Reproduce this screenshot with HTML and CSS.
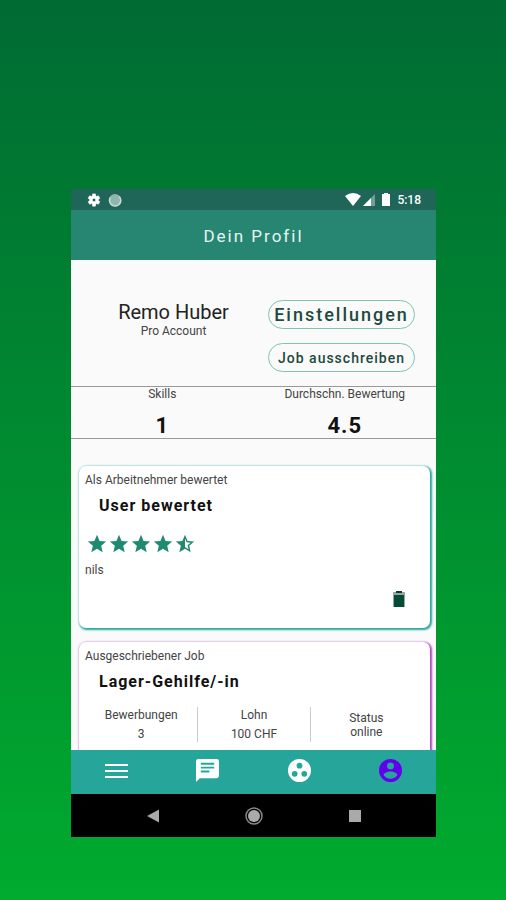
FILE: index.html
```html
<!DOCTYPE html>
<html lang="de">
<head>
<meta charset="utf-8">
<meta name="viewport" content="width=device-width, initial-scale=1">
<title>Dein Profil</title>
<link rel="stylesheet" href="styles.css">
</head>
<body>
<div class="phone">
  <div class="status">
    <svg class="status-icon" viewBox="0 0 24 24" aria-hidden="true"><path fill="#fff" fill-rule="evenodd" d="M19.4 13a7.500 7.500 0 0 0 0-2l2.600-2-2.500-4.300-3 1.200a8 8 0 0 0-1.700-1L14.400 1.500h-4.800L9.200 4.900a8 8 0 0 0-1.700 1l-3-1.200L2 9l2.600 2a7.500 7.500 0 0 0 0 2L2 15l2.500 4.300 3-1.200a8 8 0 0 0 1.700 1l.4 3.400h4.800l.4-3.400a8 8 0 0 0 1.700-1l3 1.200L22 15zM12 15a3 3 0 1 1 0-6 3 3 0 0 1 0 6z" stroke="#fff"/></svg>
    <svg class="status-icon" viewBox="0 0 24 24" aria-hidden="true"><circle cx="12" cy="12" r="10.500" fill="#8fb5ae"/><path d="M4 8a9.500 9.500 0 1 0 15-2" fill="none" stroke="#c5dad6" stroke-width="3"/></svg>
    <span class="status-right">
      <svg class="wifi" viewBox="0 0 16 13" aria-hidden="true"><path fill="#fff" d="M0 3Q8-3 16 3L8 13z"/></svg>
      <svg class="signal" viewBox="0 0 12 12" aria-hidden="true"><path fill="#6f9f95" d="M12 0v12H0z"/><path fill="#fff" d="M8 4v8H0z"/></svg>
      <svg class="battery" viewBox="0 0 8 13" aria-hidden="true"><path fill="#fff" d="M2 0h4v1h2v12H0V1h2z"/></svg>
      <span>5:18</span>
    </span>
  </div>
  <header class="bar"><h1>Dein Profil</h1></header>
  <main class="content">
    <section class="profile">
      <div class="person">
        <h2>Remo Huber</h2>
        <p>Pro Account</p>
      </div>
      <div class="actions">
        <button class="pill pill-large" type="button">Einstellungen</button>
        <button class="pill" type="button">Job ausschreiben</button>
      </div>
    </section>
    <section class="stats">
      <div><p>Skills</p><strong>1</strong></div>
      <div><p>Durchschn. Bewertung</p><strong>4.5</strong></div>
    </section>
    <section class="cards">
      <article class="card card-teal">
        <p>Als Arbeitnehmer bewertet</p>
        <h3>User bewertet</h3>
        <div class="stars" role="img" aria-label="4.5">
          <svg viewBox="0 0 24 24"><path d="M12 17.300 18.200 21l-1.600-7L22 9.200l-7.200-.6L12 2 9.200 8.600 2 9.200 7.500 14l-1.700 7z"/></svg>
          <svg viewBox="0 0 24 24"><path d="M12 17.300 18.200 21l-1.600-7L22 9.200l-7.200-.6L12 2 9.200 8.600 2 9.200 7.500 14l-1.700 7z"/></svg>
          <svg viewBox="0 0 24 24"><path d="M12 17.300 18.200 21l-1.600-7L22 9.200l-7.200-.6L12 2 9.200 8.600 2 9.200 7.500 14l-1.700 7z"/></svg>
          <svg viewBox="0 0 24 24"><path d="M12 17.300 18.200 21l-1.600-7L22 9.200l-7.200-.6L12 2 9.200 8.600 2 9.200 7.500 14l-1.700 7z"/></svg>
          <svg viewBox="0 0 24 24"><path d="m22 9.200-7.200-.6L12 2 9.200 8.600 2 9.200 7.500 14l-1.700 7 6.200-3.700 6.200 3.700-1.600-7zM12 15.400V6.100l1.700 4 4.400.4-3.300 2.900 1 4.300z"/></svg>
        </div>
        <p>nils</p>
        <button class="delete" type="button" aria-label="Löschen">
          <svg viewBox="0 0 12 17" aria-hidden="true"><path fill="#91aaa0" d="M0 1h12v15H0z"/><path fill="#064b38" d="M1 4h10v12H1z"/><path fill="#123c2f" d="M3 0h6v2H3z"/></svg>
        </button>
      </article>
      <article class="card card-purple">
        <p>Ausgeschriebener Job</p>
        <h3>Lager-Gehilfe/-in</h3>
        <dl class="facts">
          <div><dt>Bewerbungen</dt><dd>3</dd></div>
          <div><dt>Lohn</dt><dd>100 CHF</dd></div>
          <div class="tight"><dt>Status</dt><dd>online</dd></div>
        </dl>
      </article>
    </section>
  </main>
  <nav class="tabs">
    <a href="#" aria-label="Menü"><svg viewBox="0 0 23 23"><path d="M0 5h23v2H0zM0 11h23v2H0zM0 17h23v2H0z"/></svg></a>
    <a href="#" aria-label="Nachrichten"><svg viewBox="0 0 24 24"><path fill-rule="evenodd" d="M2.500 0h19A2.500 2.500 0 0 1 24 2.500v15a2.500 2.500 0 0 1-2.500 2.500H4l-4 4V2.500A2.500 2.500 0 0 1 2.500 0zM5 4v2h14V4zm0 4v2h14V8zm0 4v2h9v-2z"/></svg></a>
    <a href="#" aria-label="Gruppe"><svg viewBox="0 0 24 24"><circle cx="12" cy="12" r="12"/><g fill="#26a69a"><circle cx="12" cy="7" r="3"/><circle cx="7" cy="15.500" r="3"/><circle cx="17" cy="15.500" r="3"/></g></svg></a>
    <a class="active" href="#" aria-label="Profil"><svg viewBox="0 0 24 24"><path fill-rule="evenodd" d="M12 0a12 12 0 1 0 0 24 12 12 0 0 0 0-24zm0 3.600a3.600 3.600 0 1 1 0 7.200 3.600 3.600 0 0 1 0-7.200zm0 17c-3 0-5.700-1.500-7.200-3.900 0-2.400 4.800-3.700 7.200-3.700s7.200 1.300 7.200 3.700c-1.500 2.400-4.200 3.900-7.200 3.900z"/></svg></a>
  </nav>
  <div class="system">
    <button type="button" aria-label="Zurück"><svg viewBox="0 0 18 18"><path fill="#aaa" d="M3 9 15 2.500v13z"/></svg></button>
    <button type="button" aria-label="Start"><svg viewBox="0 0 18 18"><circle cx="9" cy="9" r="8" fill="none" stroke="#888" stroke-width="1.500"/><circle cx="9" cy="9" r="6" fill="#aaa"/></svg></button>
    <button type="button" aria-label="Übersicht"><svg viewBox="0 0 18 18"><path fill="#aaa" d="M3 3h12v12H3z"/></svg></button>
  </div>
</div>
</body>
</html>
```
FILE: styles.css
```css
* { box-sizing: border-box; }

body {
  margin: 0;
  height: 100vh;
  padding: 189px 70px 63px 71px;
  display: flex;
  background: linear-gradient(#006b33, #00ab2e);
  font-family: Roboto, "Liberation Sans", sans-serif;
  font-size: 12px;
  line-height: 16px;
  color: #444;
}

h1, h2, h3, p, dl, dd { margin: 0; }
svg { display: block; }

button {
  padding: 0;
  border: 0;
  background: none;
  font-family: inherit;
}

.phone {
  flex: 1;
  min-width: 0;
  display: flex;
  flex-direction: column;
  background: #fafafa;
}

.status {
  flex: none;
  height: 21px;
  padding: 0 15px 0 16px;
  display: flex;
  align-items: center;
  gap: 7px;
  background: #1f6659;
  color: #fff;
  font-weight: 500;
}
.status-icon { width: 14px; height: 14px; }
.status-right {
  margin-left: auto;
  display: flex;
  align-items: center;
}
.wifi { width: 16px; height: 13px; margin-right: 2px; }
.signal { width: 12px; height: 12px; margin-right: 7px; }
.battery { width: 8px; height: 13px; margin-right: 7px; }

.bar {
  flex: none;
  height: 50px;
  padding-top: 2px;
  display: grid;
  place-items: center;
  background: #268672;
  color: #e6f5f1;
}
.bar h1 {
  font-size: 17px;
  line-height: 24px;
  font-weight: 400;
  letter-spacing: 2px;
}

.content {
  flex: 1;
  min-height: 0;
  overflow: hidden auto;
  scrollbar-width: none;
}

.profile {
  padding: 40px 21px 14px 8px;
  display: flex;
  text-align: center;
}
.person { flex: 1; }
.person h2 {
  font-size: 20px;
  line-height: 24px;
  font-weight: 400;
  color: #222;
}
.person p { line-height: 14px; }
.actions {
  width: 147px;
  display: grid;
  gap: 14px;
}
.pill {
  height: 29px;
  border: 1px solid #7dc4b4;
  border-radius: 15px;
  color: #1d4a3e;
  font-size: 14px;
  font-weight: 500;
  letter-spacing: 1px;
  white-space: nowrap;
}
.pill-large {
  font-size: 18px;
  letter-spacing: 2px;
}

.stats {
  height: 53px;
  display: grid;
  grid-template-columns: 1fr 1fr;
  border-top: 1px solid #999;
  border-bottom: 1px solid #999;
  text-align: center;
}
.stats p { line-height: 14px; }
.stats strong {
  display: block;
  padding-top: 11px;
  font-size: 22px;
  line-height: 28px;
  letter-spacing: 1px;
  color: #111;
}

.cards {
  padding: 27px 6px 14px 8px;
  display: grid;
  gap: 14px;
}
.card {
  min-height: 162px;
  padding: 6px 8px 6px 6px;
  border-radius: 7px;
  background: #fff;
  display: flex;
  flex-direction: column;
}
.card-teal { box-shadow: 1px 1px 2px 1px #26a69a; }
.card-purple { box-shadow: 1px 1px 2px 1px #ab47bc; }
.card h3 {
  margin: 8px 0 0 14px;
  font-size: 16px;
  line-height: 20px;
  letter-spacing: 1px;
  color: #111;
}

.stars {
  display: flex;
  margin: 17px 0 7px 1px;
}
.stars svg { width: 22px; height: 22px; fill: #1f8a70; }

.delete {
  margin: auto 17px 14px auto;
  width: 12px;
  height: 17px;
}

.facts {
  margin-top: 15px;
  display: grid;
  grid-template-columns: repeat(3, 1fr);
  text-align: center;
}
.facts div {
  height: 35px;
  display: flex;
  flex-direction: column;
  justify-content: space-between;
}
.facts div + div { border-left: 1px solid #ccc; }
.facts .tight { justify-content: center; line-height: 14px; }

.tabs {
  flex: none;
  height: 44px;
  display: grid;
  grid-template-columns: repeat(4, 1fr);
  background: #26a69a;
}
.tabs a {
  display: grid;
  place-items: center;
  padding-bottom: 3px;
}
.tabs svg { width: 23px; height: 23px; fill: #fff; }
.tabs .active svg { fill: #6200ee; }

.system {
  flex: none;
  height: 43px;
  padding: 0 31px;
  display: grid;
  grid-template-columns: repeat(3, 1fr);
  background: #000;
}
.system button { display: grid; place-items: center; }
.system svg { width: 18px; height: 18px; }
```
